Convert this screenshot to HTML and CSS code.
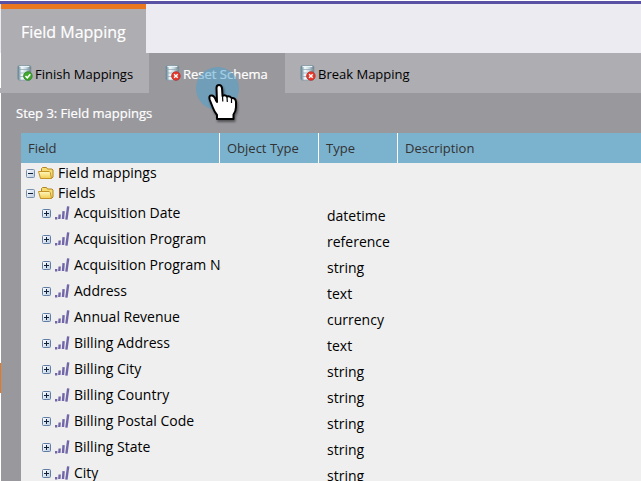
FILE: index.html
```html
<!DOCTYPE html>
<html lang="en">
<head>
<meta charset="utf-8">
<title>Field Mapping</title>
<link rel="stylesheet" href="styles.css">
</head>
<body>
<svg class="defs" aria-hidden="true">
  <defs>
    <linearGradient id="metal"><stop offset="0" stop-color="#4d7184"/><stop offset=".3" stop-color="#f4fbfd"/><stop offset=".65" stop-color="#c0d3dc"/><stop offset="1" stop-color="#65757d"/></linearGradient>
    <linearGradient id="gold" x2="0" y2="1"><stop offset="0" stop-color="#fff8bd"/><stop offset="1" stop-color="#f2cc50"/></linearGradient>
    <linearGradient id="box" x2="1" y2="1"><stop offset="0" stop-color="#fff"/><stop offset="1" stop-color="#b9cbe0"/></linearGradient>
    <symbol id="db" viewBox="0 0 16 16">
      <path d="M.8 2Q.8.700 2.300.5h10.200q1.500.2 1.500 1.500v11.500q0 1.500-1.500 1.700H2.300Q.8 15 .8 13.500z" fill="url(#metal)" stroke="#8397a2" stroke-width=".8"/>
      <path d="M1.500 4.500h12M1.500 8h12M1.500 11.500h12" stroke="#8ba3af" stroke-width=".7"/>
      <path d="M2.500 1.500h9.800" stroke="#e9f4f8"/>
    </symbol>
    <symbol id="db-ok" viewBox="0 0 16 16"><use href="#db"/><circle cx="10.900" cy="11" r="4.300" fill="#42a82e" stroke="#247c1d" stroke-width=".7"/><path d="M8.500 11l1.800 1.800 3-3.500" fill="none" stroke="#fff" stroke-width="1.600"/></symbol>
    <symbol id="db-no" viewBox="0 0 16 16"><use href="#db"/><circle cx="10.900" cy="11" r="4.300" fill="#e63a2c" stroke="#b82420" stroke-width=".7"/><path d="M9.100 9.200l3.600 3.600m0-3.600l-3.600 3.600" stroke="#fff" stroke-width="1.400"/></symbol>
    <symbol id="folder" viewBox="0 0 16 14">
      <path d="M3.500 5V2.500l1-1h4l1 1.500h4.500l1 1V11l-1.500 1.500H3z" fill="#f5dc70" stroke="#b58422"/>
      <path d="M.5 5.500h10.800l1 1 1.200 6H2.500z" fill="url(#gold)" stroke="#c39329"/>
    </symbol>
    <symbol id="minus" viewBox="0 0 9 9"><rect x=".5" y=".5" width="8" height="8" rx="1" fill="url(#box)" stroke="#7890ae"/><path d="M2 4.500h5" stroke="#102038"/></symbol>
    <symbol id="plus" viewBox="0 0 9 9"><rect x=".5" y=".5" width="8" height="8" rx="1" fill="url(#box)" stroke="#5f7da3"/><path d="M2 4.500h5M4.500 2v5" stroke="#102038"/></symbol>
    <symbol id="bars" viewBox="0 0 15 14"><path d="M0 12.300h2.300M4.300 13l.4-4.500M8 13l.6-7.800M11.400 13.700L13.200.3" fill="none" stroke="#7166a8" stroke-width="2.400"/></symbol>
  </defs>
</svg>
<main class="window">
  <header class="tabs"><h1 class="tab">Field Mapping</h1></header>
  <nav class="toolbar">
    <button class="tool finish"><svg class="db"><use href="#db-ok"/></svg><span>Finish Mappings</span></button>
    <button class="tool reset"><svg class="db"><use href="#db-no"/></svg><span>Reset Schema</span></button>
    <button class="tool break"><svg class="db"><use href="#db-no"/></svg><span>Break Mapping</span></button>
  </nav>
  <section class="panel">
    <h2 class="step">Step 3: Field mappings</h2>
    <div class="grid">
      <div class="head"><span>Field</span><span>Object Type</span><span>Type</span><span>Description</span></div>
      <div class="group"><svg class="toggle"><use href="#minus"/></svg><svg class="folder"><use href="#folder"/></svg><span>Field mappings</span></div>
      <div class="group"><svg class="toggle"><use href="#minus"/></svg><svg class="folder"><use href="#folder"/></svg><span>Fields</span></div>
      <div class="row"><div class="name"><svg class="toggle"><use href="#plus"/></svg><svg class="bars"><use href="#bars"/></svg><span>Acquisition Date</span></div><span class="type">datetime</span></div>
      <div class="row"><div class="name"><svg class="toggle"><use href="#plus"/></svg><svg class="bars"><use href="#bars"/></svg><span>Acquisition Program</span></div><span class="type">reference</span></div>
      <div class="row"><div class="name"><svg class="toggle"><use href="#plus"/></svg><svg class="bars"><use href="#bars"/></svg><span>Acquisition Program Name</span></div><span class="type">string</span></div>
      <div class="row"><div class="name"><svg class="toggle"><use href="#plus"/></svg><svg class="bars"><use href="#bars"/></svg><span>Address</span></div><span class="type">text</span></div>
      <div class="row"><div class="name"><svg class="toggle"><use href="#plus"/></svg><svg class="bars"><use href="#bars"/></svg><span>Annual Revenue</span></div><span class="type">currency</span></div>
      <div class="row"><div class="name"><svg class="toggle"><use href="#plus"/></svg><svg class="bars"><use href="#bars"/></svg><span>Billing Address</span></div><span class="type">text</span></div>
      <div class="row"><div class="name"><svg class="toggle"><use href="#plus"/></svg><svg class="bars"><use href="#bars"/></svg><span>Billing City</span></div><span class="type">string</span></div>
      <div class="row"><div class="name"><svg class="toggle"><use href="#plus"/></svg><svg class="bars"><use href="#bars"/></svg><span>Billing Country</span></div><span class="type">string</span></div>
      <div class="row"><div class="name"><svg class="toggle"><use href="#plus"/></svg><svg class="bars"><use href="#bars"/></svg><span>Billing Postal Code</span></div><span class="type">string</span></div>
      <div class="row"><div class="name"><svg class="toggle"><use href="#plus"/></svg><svg class="bars"><use href="#bars"/></svg><span>Billing State</span></div><span class="type">string</span></div>
      <div class="row"><div class="name"><svg class="toggle"><use href="#plus"/></svg><svg class="bars"><use href="#bars"/></svg><span>City</span></div><span class="type">string</span></div>
    </div>
  </section>
</main>
<i class="edge-mark gray"></i><i class="edge-mark orange"></i>
<i class="halo"></i>
<svg class="hand" viewBox="0 0 32 38"><path d="M9.500 5q0-3 2.500-3t3 3l.5 8q2.500-1.700 4.500.5 2.500-1 4.500 1.500 4-.5 4.500 4v5q0 4-2.500 7.500V36H10v-4q-2.500-3-4-7L2.800 17q-1.500-5 2.200-4.500Q7.500 13 9 17.500l1 1.500z" fill="#fff" stroke="#000" stroke-width="2" stroke-linejoin="round"/><path d="M15.500 13l.3 5.500M20 14l.3 5M24.500 15.500v4.500" stroke="#000" stroke-width="1.200"/></svg>
</body>
</html>
```
FILE: styles.css
```css
* { box-sizing: border-box; }
body { margin: 0; width: 641px; height: 481px; overflow: hidden; position: relative; background: #fff; color: #000; font: 14px/20px "Open Sans", "Noto Sans", sans-serif; }
svg { display: block; flex: none; }
.defs { position: absolute; width: 0; height: 0; }
.window { margin: 1px 0 0 1px; height: 480px; }
.tabs { height: 52px; margin-left: -1px; padding-left: 1px; border-top: 3px solid #5952a4; background: #ebebf1; }
.tab { margin: 0; width: 145px; height: 49px; padding: 11px 0 0 20px; border-top: 5px solid #e97720; background: #aeadb2; color: #fff; font-size: 16px; line-height: 24px; font-weight: 400; -webkit-text-stroke: .2px #fff; white-space: nowrap; }
.toolbar { display: flex; height: 40px; background: #aeadb2; }
.tool { display: flex; align-items: center; gap: 2px; padding: 0 0 0 16px; border: 0; background: none; color: #000; font: 13px/20px "Open Sans", "Noto Sans", sans-serif; white-space: nowrap; }
.tool span { padding-top: 2px; }
.finish { width: 148px; }
.reset { width: 136px; background: #99989d; color: #fff; -webkit-text-stroke: .2px #fff; }
.break { padding-left: 15px; }
.db { width: 16px; height: 16px; }
.panel { background: #99989d; padding-left: 20px; height: 388px; }
.step { margin: 0 0 0 -5px; height: 40px; padding-top: 10px; color: #fff; font-size: 13px; line-height: 20px; font-weight: 400; -webkit-text-stroke: .2px #fff; }
.grid { height: 348px; overflow: hidden; background: #efefef; }
.head { display: grid; grid-template-columns: 199px 99px 79px 1fr; height: 30px; background: #7bb2ce; color: #333; font-size: 13px; line-height: 30px; }
.head span { padding-left: 7px; border-right: 1px solid #fff; }
.head span:last-child { border: 0; }
.group { display: flex; align-items: center; height: 20px; padding-left: 5px; }
.toggle { width: 9px; height: 9px; }
.folder { width: 16px; height: 14px; margin: 0 4px 0 3px; }
.row { display: grid; grid-template-columns: 200px 1fr; height: 26px; }
.name { display: flex; align-items: center; height: 20px; padding-left: 21px; overflow: hidden; white-space: nowrap; }
.bars { width: 15px; height: 14px; margin: 0 4px; }
.type { padding: 3px 0 0 106px; }
.edge-mark { position: absolute; left: 0; width: 1px; }
.gray { top: 88px; height: 5px; background: #aeadb2; }
.orange { top: 363px; height: 30px; background: #e97720; }
.halo { position: absolute; left: 196px; top: 67px; width: 43px; height: 43px; border-radius: 50%; background: rgba(72, 162, 210, .5); }
.hand { position: absolute; left: 207px; top: 83px; width: 32px; height: 38px; filter: drop-shadow(1px 2px 1px rgba(0, 0, 0, .45)); }
```
